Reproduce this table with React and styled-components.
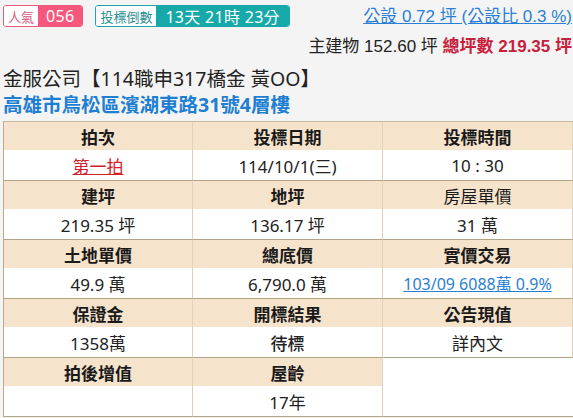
import styled, { createGlobalStyle } from "styled-components";

const GlobalStyle = createGlobalStyle`
  body {
    margin: 0;
    background: #f4f4f4;
    font-family: "Noto Sans", "Noto Sans CJK TC", sans-serif;
    color: #222;
    overflow: hidden;
  }
`;

const Page = styled.div`
  width: 573px;
  height: 418px;
  overflow: hidden;
`;

const Top = styled.div`
  display: flex;
  justify-content: space-between;
  height: 56px;
  padding: 5px 1px 0 3px;
`;

const Badges = styled.div`
  display: flex;
  gap: 12px;
  align-items: flex-start;
`;

const Badge = styled.div`
  display: flex;
  height: 22px;
  border: 1px solid ${p => p.color};
  border-radius: 3px;
  overflow: hidden;
  box-sizing: border-box;
`;

const BadgeLabel = styled.span`
  display: flex;
  align-items: center;
  padding: 0 4px;
  background: #fff;
  color: ${p => p.color};
  font-size: 13px;
`;

const BadgeValue = styled.span`
  display: flex;
  align-items: center;
  padding: 0 ${p => p.pad || 8}px;
  background: ${p => p.color};
  color: #fff;
  font-size: ${p => p.size || 15}px;
  letter-spacing: 0.3px;
`;

const Totals = styled.div`
  display: flex;
  flex-direction: column;
  align-items: flex-end;
  gap: 6px;
  font-family: "Liberation Sans", "Noto Sans CJK TC", sans-serif;
  line-height: 24px;
`;

const Link = styled.a`
  color: ${p => p.color || "#2a7fd4"};
  text-decoration: underline;
  font-size: ${p => p.size || 17}px;
`;

const Area = styled.div`
  font-size: 17px;
  color: #222;
`;

const Strong = styled.b`
  color: #c8203c;
  font-weight: 700;
`;

const Title = styled.div`
  padding: 5px 3px 0;
  font-size: 19.5px;
  color: #222;
  line-height: 26px;
`;

const Address = styled.div`
  padding: 0 3px;
  font-size: 19.5px;
  font-weight: 700;
  color: #1e7fd2;
  line-height: 26px;
`;

const Grid = styled.div`
  margin: 3px 0 0 3px;
  width: 572px;
  display: grid;
  grid-template-columns: 189px 190px 190px;
  border-top: 1px solid #c9b99c;
  border-left: 1px solid #b9ab90;
  background: #fff;
`;

const Head = styled.div`
  height: 28px;
  display: flex;
  align-items: center;
  justify-content: center;
  background: #f6e3cc;
  border-right: 1px solid #e2d3bb;
  font-size: 17px;
  font-weight: ${p => (p.light ? 400 : 700)};
  color: #1a1a1a;
`;

const Value = styled.div`
  height: 30px;
  display: flex;
  align-items: center;
  justify-content: center;
  border-right: 1px solid #ddd0ba;
  border-bottom: 1px solid #b0a386;
  font-size: 17px;
  color: #222;
  font-weight: ${p => (p.bold ? 500 : 400)};
`;

const Blank = styled.div`
  grid-row: span 2;
  border-bottom: 1px solid #b0a386;
`;

const rows = [
  [
    ["拍次", <Link color="#d0202c" size={17}>第一拍</Link>],
    ["投標日期", "114/10/1(三)"],
    ["投標時間", "10 : 30"],
  ],
  [
    ["建坪", "219.35 坪"],
    ["地坪", "136.17 坪"],
    ["房屋單價", "31 萬", true],
  ],
  [
    ["土地單價", "49.9 萬"],
    ["總底價", "6,790.0 萬"],
    ["實價交易", <Link size={16}>103/09 6088萬 0.9%</Link>],
  ],
  [
    ["保證金", "1358萬"],
    ["開標結果", "待標", false, true],
    ["公告現值", "詳內文"],
  ],
];

export default function App() {
  return (
    <Page>
      <GlobalStyle />
      <Top>
        <Badges>
          <Badge color="#f0587a">
            <BadgeLabel color="#d9557a">人氣</BadgeLabel>
            <BadgeValue color="#f5587c" size={16} pad={8}>056</BadgeValue>
          </Badge>
          <Badge color="#1aa7a8">
            <BadgeLabel color="#2b8f93">投標倒數</BadgeLabel>
            <BadgeValue color="#17a9aa" size={16} pad={9}>13天 21時 23分</BadgeValue>
          </Badge>
        </Badges>
        <Totals>
          <Link>公設 0.72 坪 (公設比 0.3 %)</Link>
          <Area>
            主建物 152.60 坪 <Strong>總坪數 219.35 坪</Strong>
          </Area>
        </Totals>
      </Top>
      <Title>金服公司【114職申317橋金 黃OO】</Title>
      <Address>高雄市鳥松區濱湖東路31號4層樓</Address>
      <Grid>
        {rows.map((row, i) => [
          ...row.map(([h, , light], j) => (
            <Head key={`h${i}${j}`} light={light}>{h}</Head>
          )),
          ...row.map(([, v, , bold], j) => (
            <Value key={`v${i}${j}`} bold={bold}>{v}</Value>
          )),
        ])}
        <Head>拍後增值</Head>
        <Head>屋齡</Head>
        <Blank />
        <Value />
        <Value>17年</Value>
      </Grid>
    </Page>
  );
}
